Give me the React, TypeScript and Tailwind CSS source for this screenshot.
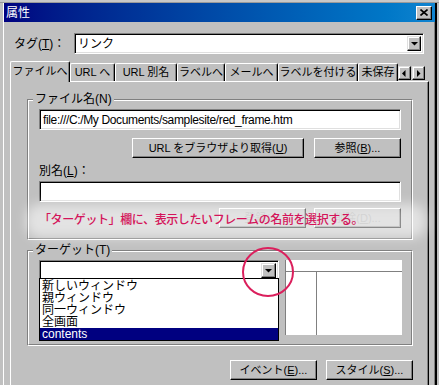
const font = "font-['Liberation_Sans','Noto_Sans_CJK_JP',sans-serif]";

function Button({ label, w, faint }: { label: React.ReactNode; w: string; faint?: boolean }) {
  return (
    <div
      className={`${w} h-[20px] flex items-center justify-center border border-t-white border-l-white border-r-black border-b-black bg-[#c0c0c0] shadow-[inset_-1px_-1px_0_#808080] text-[11px] ${faint ? "text-[#a0a0a0]" : "text-black"}`}
    >
      {label}
    </div>
  );
}

function Sunken({ className, children }: { className: string; children?: React.ReactNode }) {
  return (
    <div
      className={`${className} border border-t-[#808080] border-l-[#808080] border-r-white border-b-white shadow-[inset_1px_1px_0_#000,inset_-1px_-1px_0_#dfdfdf] bg-white`}
    >
      {children}
    </div>
  );
}

function ArrowBtn({ className, dir = "down" }: { className: string; dir?: "down" | "left" | "right" }) {
  return (
    <div
      className={`${className} flex items-center justify-center border border-t-[#dfdfdf] border-l-[#dfdfdf] border-r-black border-b-black bg-[#c0c0c0] shadow-[inset_-1px_-1px_0_#808080,inset_1px_1px_0_#fff]`}
    >
      <svg width="7" height="7" viewBox="0 0 7 7">
        {dir === "down" && <path d="M0 2h7L3.5 5.5z" fill="#000" />}
        {dir === "left" && <path d="M4.5 0v7L1 3.5z" fill="#000" />}
        {dir === "right" && <path d="M2 0v7l3.5-3.5z" fill="#000" />}
      </svg>
    </div>
  );
}

function Group({ label, className, children }: { label: string; className: string; children: React.ReactNode }) {
  return (
    <div className={`${className} relative border border-t-[#808080] border-l-[#808080] border-r-white border-b-white`}>
      <div className="absolute inset-0 border border-t-white border-l-white border-r-[#808080] border-b-[#808080] pointer-events-none" />
      <span className="absolute -top-[8px] left-[5px] px-[2px] bg-[#c0c0c0] text-[12px] leading-[14px]">{label}</span>
      {children}
    </div>
  );
}

const tabs = [
  { t: "URL へ", w: "w-[45px]" },
  { t: "URL 別名", w: "w-[62px]" },
  { t: "ラベルへ", w: "w-[48px]" },
  { t: "メールへ", w: "w-[53px]" },
  { t: "ラベルを付ける", w: "w-[80px]" },
  { t: "未保存", w: "w-[40px]" },
];

export default function App() {
  return (
    <div className={`${font} relative w-[439px] h-[385px] overflow-hidden bg-[#c0c0c0] text-black`}>
      <div className="h-[3px] bg-[#c8c8c8] border-b border-[#9a9a9a]" />
      <div className="ml-[3px] w-[434px] h-[382px] border-l border-white border-r-2 border-r-black flex flex-col shadow-[inset_-1px_0_0_#808080]">
        {/* title bar */}
        <div className="h-[19px] bg-gradient-to-r from-[#000080] to-[#1084d0] flex items-center justify-between pl-[2px] pr-[3px]">
          <span className="text-white text-[12px] leading-none">属性</span>
          <div className="w-[16px] h-[14px] flex items-center justify-center border border-t-white border-l-white border-r-black border-b-black bg-[#c0c0c0] shadow-[inset_-1px_-1px_0_#808080]">
            <svg width="8" height="7" viewBox="0 0 8 7">
              <path d="M0.5 0.5l7 6M7.5 0.5l-7 6" stroke="#000" strokeWidth="1.6" />
            </svg>
          </div>
        </div>

        {/* tag row */}
        <div className="flex items-center pt-[11px] pl-[10px]">
          <span className="w-[60px] text-[12px]">タグ(<u>T</u>)：</span>
          <Sunken className="w-[350px] h-[21px] flex items-center justify-between pl-[3px] pr-[2px]">
            <span className="text-[12px]">リンク</span>
            <ArrowBtn className="w-[14px] h-[15px]" />
          </Sunken>
        </div>

        {/* tabs */}
        <div className="flex items-end mt-[6px] ml-[6px] h-[21px] text-[11px]">
          <div className="w-[60px] h-[21px] -mb-px z-10 bg-[#c0c0c0] border-t border-l border-white border-r border-r-black rounded-t-[2px] shadow-[inset_-1px_0_0_#808080] flex items-center justify-center pb-[2px]">
            ファイルへ
          </div>
          {tabs.map((tab) => (
            <div
              key={tab.t}
              className={`${tab.w} h-[18px] border-t border-l border-white border-r border-r-black rounded-t-[2px] shadow-[inset_-1px_0_0_#808080] flex items-center justify-center whitespace-nowrap overflow-hidden`}
            >
              {tab.t}
            </div>
          ))}
          <div className="flex gap-[1px] mb-[1px] ml-[0px]">
            <ArrowBtn className="w-[13px] h-[14px]" dir="left" />
            <ArrowBtn className="w-[13px] h-[14px]" dir="right" />
          </div>
        </div>

        {/* panel */}
        <div className="ml-[6px] w-[419px] flex-1 border-t border-l border-white border-r border-r-black shadow-[inset_-1px_0_0_#808080] pt-[17px] pl-[16px] flex flex-col">
          <Group label="ファイル名(N)" className="w-[386px] h-[141px]">
            <div className="flex flex-col pt-[9px] pl-[11px] w-[373px]">
              <Sunken className="w-[362px] h-[21px] flex items-center pl-[3px]">
                <span className="text-[12px] tracking-[-0.35px]">file:///C:/My Documents/samplesite/red_frame.htm</span>
              </Sunken>
              <div className="flex justify-end gap-[10px] mt-[8px] w-[362px]">
                <Button w="w-[172px]" label={<>URL をブラウザより取得(<u>U</u>)</>} />
                <Button w="w-[87px]" label={<>参照(<u>B</u>)...</>} />
              </div>
              <span className="text-[12px] mt-[5px] leading-[16px]">別名(<u>L</u>)：</span>
              <Sunken className="w-[362px] h-[21px] mt-[2px]" />
              <div className="flex justify-end gap-[8px] mt-[6px] w-[362px]">
                <Button w="w-[87px]" faint label="登録(A)" />
                <Button w="w-[87px]" faint label={<>削除(<u>D</u>)...</>} />
              </div>
            </div>
          </Group>

          <Group label="ターゲット(T)" className="w-[386px] h-[96px] mt-[10px]">
            <div className="flex gap-[6px] pt-[9px] pl-[11px]">
              <Sunken className="w-[240px] h-[20px] flex items-center justify-end pr-[2px]">
                <ArrowBtn className="w-[15px] h-[15px]" />
              </Sunken>
              <div className="w-[117px] h-[75px] bg-white border-l border-[#808080] flex flex-col">
                <div className="h-[12px] border-b border-[#808080]" />
                <div className="flex-1 flex">
                  <div className="w-[31px] border-r border-[#808080]" />
                </div>
              </div>
            </div>
          </Group>

          <div className="flex justify-end gap-[9px] mt-[14px] w-[386px] text-[11px]">
            <Button w="w-[87px]" label={<>イベント(<u>E</u>)...</>} />
            <Button w="w-[87px]" label={<>スタイル(<u>S</u>)...</>} />
          </div>
        </div>
      </div>

      {/* dropdown list */}
      <div className="absolute left-[39px] top-[278px] w-[240px] h-[63px] bg-white border border-black flex flex-col text-[12px] leading-[12px] pt-[1px]">
        <div className="h-[12px] pl-[2px]">新しいウィンドウ</div>
        <div className="h-[12px] pl-[2px]">親ウィンドウ</div>
        <div className="h-[12px] pl-[2px]">同一ウィンドウ</div>
        <div className="h-[12px] pl-[2px]">全画面</div>
        <div className="h-[12px] pl-[2px] bg-[#000080] text-white">contents</div>
      </div>

      {/* annotation */}
      <div className="absolute left-[26px] top-[204px] w-[400px] h-[34px] rounded-[14px] bg-white/55 blur-[6px]" />
      <span className="absolute left-[39px] top-[212px] text-[12px] leading-[16px] tracking-[-0.4px] text-[#d4145a] font-medium whitespace-nowrap">
        「ターゲット」欄に、表示したいフレームの名前を選択する。
      </span>

      {/* red circle */}
      <svg className="absolute left-[242px] top-[246px]" width="54" height="52" viewBox="0 0 54 52">
        <ellipse cx="26" cy="26" rx="25" ry="24" fill="none" stroke="#db1f5c" strokeWidth="2" />
      </svg>
    </div>
  );
}
